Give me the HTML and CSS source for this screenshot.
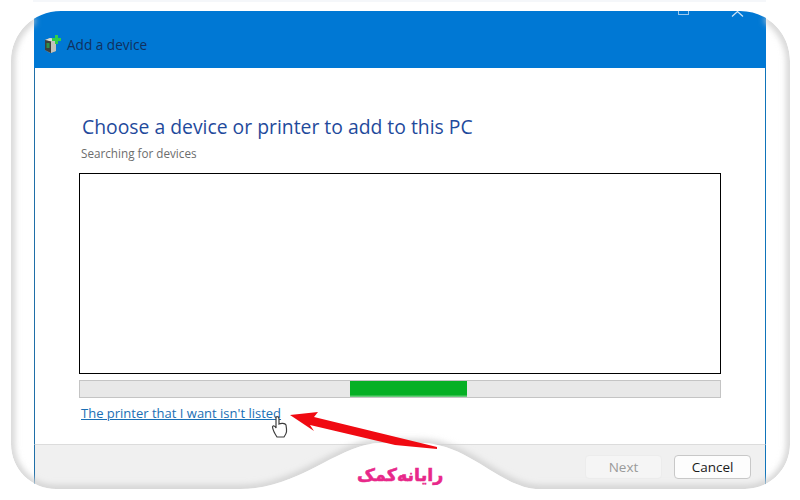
FILE: index.html
```html
<!DOCTYPE html>
<html lang="en">
<head>
<meta charset="utf-8">
<title>Add a device</title>
<link rel="stylesheet" href="styles.css">
</head>
<body>
<div class="stage">
  <div class="window">
    <header class="titlebar">
      <svg class="controls" width="70" height="8" viewBox="0 0 70 8">
        <rect x="0.5" y="-6" width="10" height="9.5" fill="none" stroke="#9cc8ec"/>
        <path d="M54 5.500L59.500 0.500L65 5.500" fill="none" stroke="#cfe4f6" stroke-width="1.200"/>
      </svg>
      <svg class="app-icon" width="18" height="18" viewBox="0 0 18 18">
        <path d="M1 5L6 3L12 4V16L6 18L1 15Z" fill="#8b8b85"/>
        <path d="M1 5L6 3L12 4L7 6.500Z" fill="#dcdcd6"/>
        <path d="M7 6.500L12 4V16L7 18Z" fill="#c3c3bc"/>
        <path d="M1 5L7 6.500V18L1 15Z" fill="#3c3f3c"/>
        <rect x="2.500" y="8" width="3" height="5" fill="#2f8f4a"/>
        <path d="M11 0H14V3H17V6H14V9H11V6H8V3H11Z" fill="#2fd04a"/>
      </svg>
      <span class="title">Add a device</span>
    </header>
    <main class="content">
      <h1 class="heading">Choose a device or printer to add to this PC</h1>
      <p class="status">Searching for devices</p>
      <div class="listbox"></div>
      <div class="progress"><div class="progress-fill"></div></div>
      <a class="link" href="#">The printer that I want isn't listed</a>
    </main>
    <footer class="footer">
      <button class="btn btn-disabled" type="button">Next</button>
      <button class="btn" type="button">Cancel</button>
    </footer>
  </div>

  <svg class="frame" width="800" height="500" viewBox="0 0 800 500">
    <defs>
      <filter id="soft" x="-5%" y="-5%" width="110%" height="110%"><feGaussianBlur stdDeviation="3"/></filter>
      <clipPath id="inside">
        <path d="M61 11H740C768 11 790 33 790 61V444C790 469 770 489 745 489H540C500 489 470 443 420 443H380C340 443 300 489 240 489H56C31 489 11 469 11 444V61C11 33 33 11 61 11Z"/>
      </clipPath>
    </defs>
    <g clip-path="url(#inside)">
      <path d="M34 19C20 28 11 44 11 61V444C11 469 31 489 56 489H240C300 489 340 443 380 443H420C470 443 500 489 540 489H745C770 489 790 469 790 444V61C790 44 780 28 766 18" fill="none" stroke="#d0d0d0" stroke-width="7" filter="url(#soft)"/>
    </g>
    <path fill="#fff" fill-rule="evenodd" d="M0 0H800V500H0ZM61 11H740C768 11 790 33 790 61V444C790 469 770 489 745 489H540C500 489 470 443 420 443H380C340 443 300 489 240 489H56C31 489 11 469 11 444V61C11 33 33 11 61 11Z"/>
    <rect x="33" y="0" width="733" height="2" fill="#f5f7fa"/>
    <path d="M290 415L318 412L314 417L437 447V449L395 445L310 425L314 431Z" fill="#f00a12"/>
    <path d="M276 417C277.500 416 279 417 279 419V424C281 423 285 423 286 425C287 431 287 433 284 437H277C275 434 273 431 272.500 427C273 425 275 426 276 428V418Z" fill="#fff" stroke="#3c3c3c" stroke-width="1.200"/>
  </svg>

  <span class="logo" lang="fa" dir="rtl">رایانه کمک</span>
</div>
</body>
</html>
```

FILE: styles.css
```css
html, body {
  margin: 0;
  padding: 0;
  background: #fff;
}

.stage {
  position: relative;
  width: 800px;
  height: 500px;
  overflow: hidden;
  font-family: "Open Sans", "Noto Sans", sans-serif;
}

.window {
  display: flex;
  flex-direction: column;
  width: 732px;
  height: 489px;
  margin-left: 34px;
  padding-top: 11px;
  box-sizing: border-box;
}

.titlebar {
  position: relative;
  display: flex;
  align-items: center;
  gap: 5px;
  flex: 0 0 57px;
  padding: 9px 0 0 10px;
  box-sizing: border-box;
  background: #0078d4;
}

.controls {
  position: absolute;
  top: 0;
  left: 644px;
}

.title {
  font-size: 13.600px;
  color: #10305e;
}

.content {
  display: flex;
  flex-direction: column;
  flex: 1;
  padding: 45px 44px 0 44px;
  box-sizing: border-box;
  background: #fff;
  border-left: 1px solid #1f6fa8;
  border-right: 1px solid #0f74ba;
}

.heading {
  margin: 0 0 0 3px;
  font-size: 19.350px;
  font-weight: 400;
  line-height: 27px;
  color: #1f4a9c;
}

.status {
  margin: 6px 0 0 2px;
  font-size: 11.700px;
  line-height: 15px;
  color: #6d6d6d;
}

.listbox {
  height: 201px;
  margin-top: 12px;
  border: 1px solid #000;
  box-sizing: border-box;
  background: #fff;
}

.progress {
  height: 18px;
  margin-top: 6px;
  padding-left: 270px;
  box-sizing: border-box;
  background: #e8e8e8;
  border: 1px solid #c4c4c4;
}

.progress-fill {
  width: 117px;
  height: 16px;
  background: linear-gradient(#06b025 85%, #7fd48e);
}

.link {
  align-self: flex-start;
  margin: 7px 0 0 2px;
  font-size: 13px;
  line-height: 16px;
  color: #1a6fb5;
}

.footer {
  display: flex;
  justify-content: flex-end;
  gap: 12px;
  flex: 0 0 45px;
  padding: 10px 14px 0 0;
  box-sizing: border-box;
  background: #f0f0f0;
  border-top: 1px solid #dcdcdc;
  border-left: 1px solid #1f6fa8;
  border-right: 1px solid #0f74ba;
}

.btn {
  width: 77px;
  height: 24px;
  padding: 0;
  font-family: inherit;
  font-size: 13.500px;
  color: #1a1a1a;
  background: #fdfdfd;
  border: 1px solid #c8c8c8;
  border-radius: 4px;
}

.btn-disabled {
  color: #9a9a9a;
  background: #f5f5f5;
  border-color: #ececec;
}

.frame {
  position: absolute;
  top: 0;
  left: 0;
}

.logo {
  position: absolute;
  top: 461px;
  left: 357px;
  font-family: "DejaVu Sans", sans-serif;
  font-size: 17.500px;
  font-weight: 700;
  line-height: 28px;
  word-spacing: -6px;
  -webkit-text-stroke: 0.5px #e8288a;
  color: #e8288a;
  white-space: nowrap;
}
```
